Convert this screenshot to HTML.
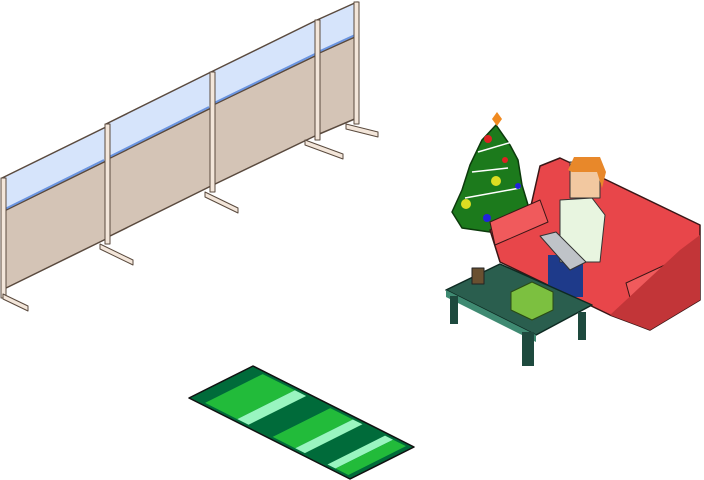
<!DOCTYPE html>
<html><head><style>html,body{margin:0;padding:0;background:#fff;width:704px;height:480px;overflow:hidden}</style></head>
<body>
<svg width="704" height="480" viewBox="0 0 704 480" xmlns="http://www.w3.org/2000/svg" stroke-linejoin="round">
<!-- wall panels -->
<g stroke="#5a4a3e" stroke-width="1.5">
<polygon points="2,212 106,161 106,239 2,290" fill="#d4c4b6"/>
<polygon points="2,178 106,127 106,161 2,212" fill="#d6e4fb"/>
<polygon points="106,160 211,108 211,186 106,238" fill="#d4c4b6"/>
<polygon points="106,124 211,72 211,108 106,160" fill="#d6e4fb"/>
<polygon points="211,106 317,55 317,135 211,186" fill="#d4c4b6"/>
<polygon points="211,72 317,20 317,55 211,106" fill="#d6e4fb"/>
<polygon points="317,54 357,36 357,118 317,135" fill="#d4c4b6"/>
<polygon points="317,20 357,2 357,36 317,54" fill="#d6e4fb"/>
</g>
<g stroke="#6a94e0" stroke-width="2" fill="none">
<line x1="3" y1="210" x2="104" y2="160"/><line x1="107" y1="158" x2="209" y2="107"/>
<line x1="212" y1="104" x2="315" y2="54"/><line x1="318" y1="52" x2="355" y2="35"/>
</g>
<g fill="#f3e6da" stroke="#5a4a3e" stroke-width="1">
<rect x="1" y="178" width="5" height="120"/>
<rect x="105" y="124" width="5" height="120"/>
<rect x="210" y="72" width="5" height="120"/>
<rect x="315" y="20" width="5" height="120"/>
<rect x="354" y="2" width="5" height="122"/>
<polygon points="3,294 28,306 28,311 3,299"/>
<polygon points="100,244 133,260 133,265 100,249"/>
<polygon points="205,192 238,208 238,213 205,197"/>
<polygon points="305,140 343,154 343,159 305,145"/>
<polygon points="346,124 378,132 378,137 346,129"/>
</g>
<!-- rug -->
<g transform="matrix(161,81,64,-32,189,398)">
<rect x="0" y="0" width="1" height="1" fill="#006b3a"/>
<rect x="0.08" y="0.05" width="0.2" height="0.9" fill="#22bb3a"/>
<rect x="0.28" y="0.05" width="0.07" height="0.9" fill="#99f5c0"/>
<rect x="0.5" y="0.05" width="0.14" height="0.9" fill="#22bb3a"/>
<rect x="0.64" y="0.05" width="0.06" height="0.9" fill="#99f5c0"/>
<rect x="0.84" y="0.05" width="0.05" height="0.9" fill="#99f5c0"/>
<rect x="0.89" y="0.05" width="0.08" height="0.9" fill="#22bb3a"/>
</g>
<polygon points="189,398 253,366 414,447 350,479" fill="none" stroke="#111" stroke-width="1.5"/>
<!-- tree -->
<polygon points="496,125 510,145 518,160 522,185 528,205 512,228 490,232 462,228 452,212 462,190 470,165 482,140" fill="#1c7a1c" stroke="#0c3a0c" stroke-width="1.5"/>
<polyline points="478,152 512,142 M470,180" fill="none" stroke="#fff" stroke-width="1.5"/>
<polyline points="472,172 508,168" fill="none" stroke="#fff" stroke-width="1.5"/>
<polyline points="465,198 520,188" fill="none" stroke="#fff" stroke-width="1.5"/>
<circle cx="488" cy="139" r="4" fill="#d22"/><circle cx="496" cy="181" r="5" fill="#dd2"/><circle cx="466" cy="204" r="5" fill="#dd2"/><circle cx="487" cy="218" r="4" fill="#22d"/><circle cx="505" cy="160" r="3" fill="#d22"/><circle cx="518" cy="186" r="3" fill="#22d"/>
<polygon points="497,112 502,119 497,126 492,119" fill="#f08a20"/>
<!-- sofa -->
<polygon points="540,166 560,158 590,172 700,225 700,300 650,330 610,315 500,262 490,230 530,210" fill="#e8464a" stroke="#3a1616" stroke-width="1.5"/>
<polygon points="490,222 540,200 548,222 495,245" fill="#f05a5c" stroke="#3a1616" stroke-width="1"/>
<polygon points="626,283 680,258 686,280 632,305" fill="#f05a5c" stroke="#3a1616" stroke-width="1"/>
<polygon points="610,315 650,330 700,300 700,235 680,250" fill="#c23538"/>
<!-- person -->
<rect x="548" y="255" width="35" height="42" fill="#1e3a8a"/>
<polygon points="560,200 592,198 605,215 600,262 560,262" fill="#e8f5e0" stroke="#333" stroke-width="1"/>
<rect x="570" y="162" width="30" height="36" fill="#f2c8a0" stroke="#333" stroke-width="1"/>
<polygon points="568,170 574,157 600,157 606,172 602,188 597,172 572,172" fill="#e8882a"/>
<polygon points="540,236 556,232 586,262 570,270" fill="#bfc3c8" stroke="#333" stroke-width="1"/>
<!-- table -->
<polygon points="446,290 500,264 592,305 536,335" fill="#2a5e4e" stroke="#0e2a22" stroke-width="1.5"/>
<polygon points="446,290 536,335 536,342 446,297" fill="#3f8a72"/>
<rect x="450" y="296" width="8" height="28" fill="#1e4a3e"/><rect x="522" y="332" width="12" height="34" fill="#1e4a3e"/><rect x="578" y="312" width="8" height="28" fill="#1e4a3e"/>
<polygon points="511,292 532,282 553,292 553,310 532,320 511,310" fill="#7cc040" stroke="#2a4a14" stroke-width="1"/>
<rect x="472" y="268" width="12" height="16" fill="#6a5030" stroke="#222" stroke-width="1"/>
</svg>
</body></html>
